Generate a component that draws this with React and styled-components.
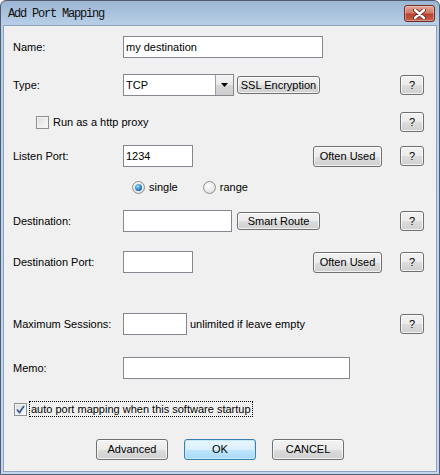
import React from 'react';
import styled, { createGlobalStyle, css } from 'styled-components';

const Global = createGlobalStyle`
  html, body { margin: 0; padding: 0; background: #fff; }
  body { font-family: "Liberation Sans", Arial, sans-serif; font-size: 11px; color: #000; }
`;

const Frame = styled.div`
  width: 440px;
  height: 475px;
  box-sizing: border-box;
  border: 1px solid #4f5d6e;
  border-radius: 6px 6px 0 0;
  background: linear-gradient(#9bb5d2 0, #b9cfe8 24px, #c2d7ee 100%);
  padding: 0 2px 2px;
  display: flex;
  flex-direction: column;
`;

const TitleBar = styled.div`
  height: 24px;
  display: flex;
  align-items: flex-start;
  justify-content: space-between;
  padding: 0 2px 0 5px;
`;

const Caption = styled.span`
  font-family: "Liberation Mono", "DejaVu Sans Mono", monospace;
  font-size: 12px;
  letter-spacing: -1.2px;
  margin-top: 6px;
  color: #111;
`;

const CloseBox = styled.div`
  margin-top: 4px;
  width: 31px;
  height: 17px;
  box-sizing: border-box;
  border: 1px solid #6e2b22;
  border-radius: 3px;
  background: linear-gradient(#e3a497 0%, #d37a67 45%, #b8412f 55%, #c9604a 100%);
  box-shadow: inset 0 0 0 1px rgba(255, 255, 255, 0.35);
  display: flex;
  align-items: center;
  justify-content: center;
`;

const Client = styled.div`
  flex: 1;
  border: 1px solid #8ba3bf;
  background: #f0f0f0;
  display: flex;
  flex-direction: column;
  padding-top: 10px;
`;

const Row = styled.div`
  display: grid;
  grid-template-columns: 110px 1fr 24px;
  align-items: center;
  height: 22px;
  padding: 0 12px 0 9px;
  margin-top: ${p => p.$gap || 0}px;
`;

const Label = styled.span`
  white-space: nowrap;
`;

const Field = styled.div`
  display: flex;
  align-items: center;
  gap: ${p => p.$gap || 0}px;
  justify-content: ${p => (p.$spread ? 'space-between' : 'flex-start')};
  padding-left: ${p => p.$indent || 0}px;
`;

const Input = styled.div`
  width: ${p => p.$w}px;
  height: 22px;
  box-sizing: border-box;
  border: 1px solid #848891;
  background: #fff;
  padding: 3px 2px 0;
  line-height: 14px;
`;

const Combo = styled.div`
  width: 111px;
  height: 22px;
  box-sizing: border-box;
  border: 1px solid #848891;
  background: #fff;
  display: flex;
`;

const ComboText = styled.div`
  flex: 1;
  padding: 3px 2px 0;
  line-height: 14px;
`;

const ComboArrow = styled.div`
  width: 17px;
  border-left: 1px solid #9a9ea6;
  background: linear-gradient(#f4f4f4 0%, #e8e8e8 50%, #d7d7d7 51%, #cdcdcd 100%);
  display: flex;
  align-items: center;
  justify-content: center;
`;

const btnBase = css`
  box-sizing: border-box;
  border: 1px solid #707070;
  border-radius: 3px;
  background: linear-gradient(#f2f2f2 0%, #ebebeb 50%, #dddddd 51%, #cfcfcf 100%);
  box-shadow: inset 0 0 0 1px rgba(255, 255, 255, 0.7);
  font-family: inherit;
  font-size: 11px;
  color: #000;
  padding: 0;
  display: flex;
  align-items: center;
  justify-content: center;
`;

const Button = styled.div`
  ${btnBase};
  width: ${p => p.$w}px;
  height: ${p => p.$h || 21}px;
  margin-right: ${p => p.$mr || 0}px;
  ${p =>
    p.$focus &&
    css`
      border-color: #3c7fb1;
      background: linear-gradient(#eaf6fd 0%, #d9f0fc 50%, #bee6fd 51%, #a7d9f5 100%);
      box-shadow: inset 0 0 0 1px #c4e9fb;
    `}
`;

const HelpButton = styled.div`
  ${btnBase};
  width: 24px;
  height: 20px;
  grid-column: 3;
`;

const CheckRow = styled.label`
  display: flex;
  align-items: center;
  gap: ${p => p.$gap ?? 4}px;
  grid-column: 1 / 3;
  padding-left: ${p => p.$indent || 0}px;
`;

const Box = styled.span`
  width: 13px;
  height: 13px;
  box-sizing: border-box;
  border: 1px solid #8e8f8f;
  background: linear-gradient(135deg, #dcdcdc, #fbfbfb);
  box-shadow: inset 0 0 0 1px #f4f4f4;
  display: flex;
  align-items: center;
  justify-content: center;
`;

const FocusText = styled.span`
  border: 1px dotted #000;
  padding: 1px;
  line-height: 12px;
`;

const RadioItem = styled.span`
  display: flex;
  align-items: center;
  gap: 4px;
  margin-right: ${p => p.$mr || 0}px;
`;

const RadioDot = styled.span`
  width: 13px;
  height: 13px;
  box-sizing: border-box;
  border-radius: 50%;
  border: 1px solid #8e8f8f;
  background: radial-gradient(circle at 40% 35%, #ffffff, #d6d6d6);
  display: flex;
  align-items: center;
  justify-content: center;
  &::after {
    content: '';
    display: ${p => (p.$on ? 'block' : 'none')};
    width: 7px;
    height: 7px;
    border-radius: 50%;
    background: radial-gradient(circle at 40% 35%, #9fdcff, #1c78c4 60%, #0c4f8e);
  }
`;

const Note = styled.span`
  margin-left: 3px;
`;

const ButtonBar = styled.div`
  display: flex;
  justify-content: center;
  align-items: center;
  gap: 16px;
  height: 22px;
  margin-top: 18px;
`;

const CloseGlyph = () => (
  <svg width="13" height="10" viewBox="0 0 13 10">
    <path d="M2 1 L11 9 M11 1 L2 9" stroke="#5b2018" strokeWidth="4" strokeLinecap="round" />
    <path d="M2 1 L11 9 M11 1 L2 9" stroke="#fff" strokeWidth="2.4" strokeLinecap="round" />
  </svg>
);

const Arrow = () => (
  <svg width="7" height="4" viewBox="0 0 7 4">
    <path d="M0 0 H7 L3.5 4 Z" fill="#000" />
  </svg>
);

const Tick = () => (
  <svg width="9" height="9" viewBox="0 0 9 9">
    <path d="M1 4.5 L3.5 7.5 L8 1" fill="none" stroke="#3a5a9c" strokeWidth="1.8" />
  </svg>
);

export default function App() {
  return (
    <>
      <Global />
      <Frame>
        <TitleBar>
          <Caption>Add Port Mapping</Caption>
          <CloseBox>
            <CloseGlyph />
          </CloseBox>
        </TitleBar>
        <Client>
          <Row>
            <Label>Name:</Label>
            <Field>
              <Input $w={200}>my destination</Input>
            </Field>
          </Row>

          <Row $gap={16}>
            <Label>Type:</Label>
            <Field $gap={3}>
              <Combo>
                <ComboText>TCP</ComboText>
                <ComboArrow>
                  <Arrow />
                </ComboArrow>
              </Combo>
              <Button $w={83} $h={18}>SSL Encryption</Button>
            </Field>
            <HelpButton>?</HelpButton>
          </Row>

          <Row $gap={15}>
            <CheckRow $indent={23}>
              <Box />
              Run as a http proxy
            </CheckRow>
            <HelpButton>?</HelpButton>
          </Row>

          <Row $gap={12}>
            <Label>Listen Port:</Label>
            <Field $spread>
              <Input $w={70}>1234</Input>
              <Button $w={69} $mr={18}>Often Used</Button>
            </Field>
            <HelpButton>?</HelpButton>
          </Row>

          <Row $gap={9}>
            <span />
            <Field $indent={9}>
              <RadioItem $mr={25}>
                <RadioDot $on />
                single
              </RadioItem>
              <RadioItem>
                <RadioDot />
                range
              </RadioItem>
            </Field>
          </Row>

          <Row $gap={12}>
            <Label>Destination:</Label>
            <Field $gap={5}>
              <Input $w={109} />
              <Button $w={83} $h={18}>Smart Route</Button>
            </Field>
            <HelpButton>?</HelpButton>
          </Row>

          <Row $gap={19}>
            <Label>Destination Port:</Label>
            <Field $spread>
              <Input $w={70} />
              <Button $w={69} $mr={18}>Often Used</Button>
            </Field>
            <HelpButton>?</HelpButton>
          </Row>

          <Row $gap={40}>
            <Label>Maximum Sessions:</Label>
            <Field>
              <Input $w={64} />
              <Note>unlimited if leave empty</Note>
            </Field>
            <HelpButton>?</HelpButton>
          </Row>

          <Row $gap={22}>
            <Label>Memo:</Label>
            <Field>
              <Input $w={227} />
            </Field>
          </Row>

          <Row $gap={19}>
            <CheckRow $indent={1} $gap={2}>
              <Box>
                <Tick />
              </Box>
              <FocusText>auto port mapping when this software startup</FocusText>
            </CheckRow>
          </Row>

          <ButtonBar>
            <Button $w={72}>Advanced</Button>
            <Button $w={72} $focus>OK</Button>
            <Button $w={72}>CANCEL</Button>
          </ButtonBar>
        </Client>
      </Frame>
    </>
  );
}
